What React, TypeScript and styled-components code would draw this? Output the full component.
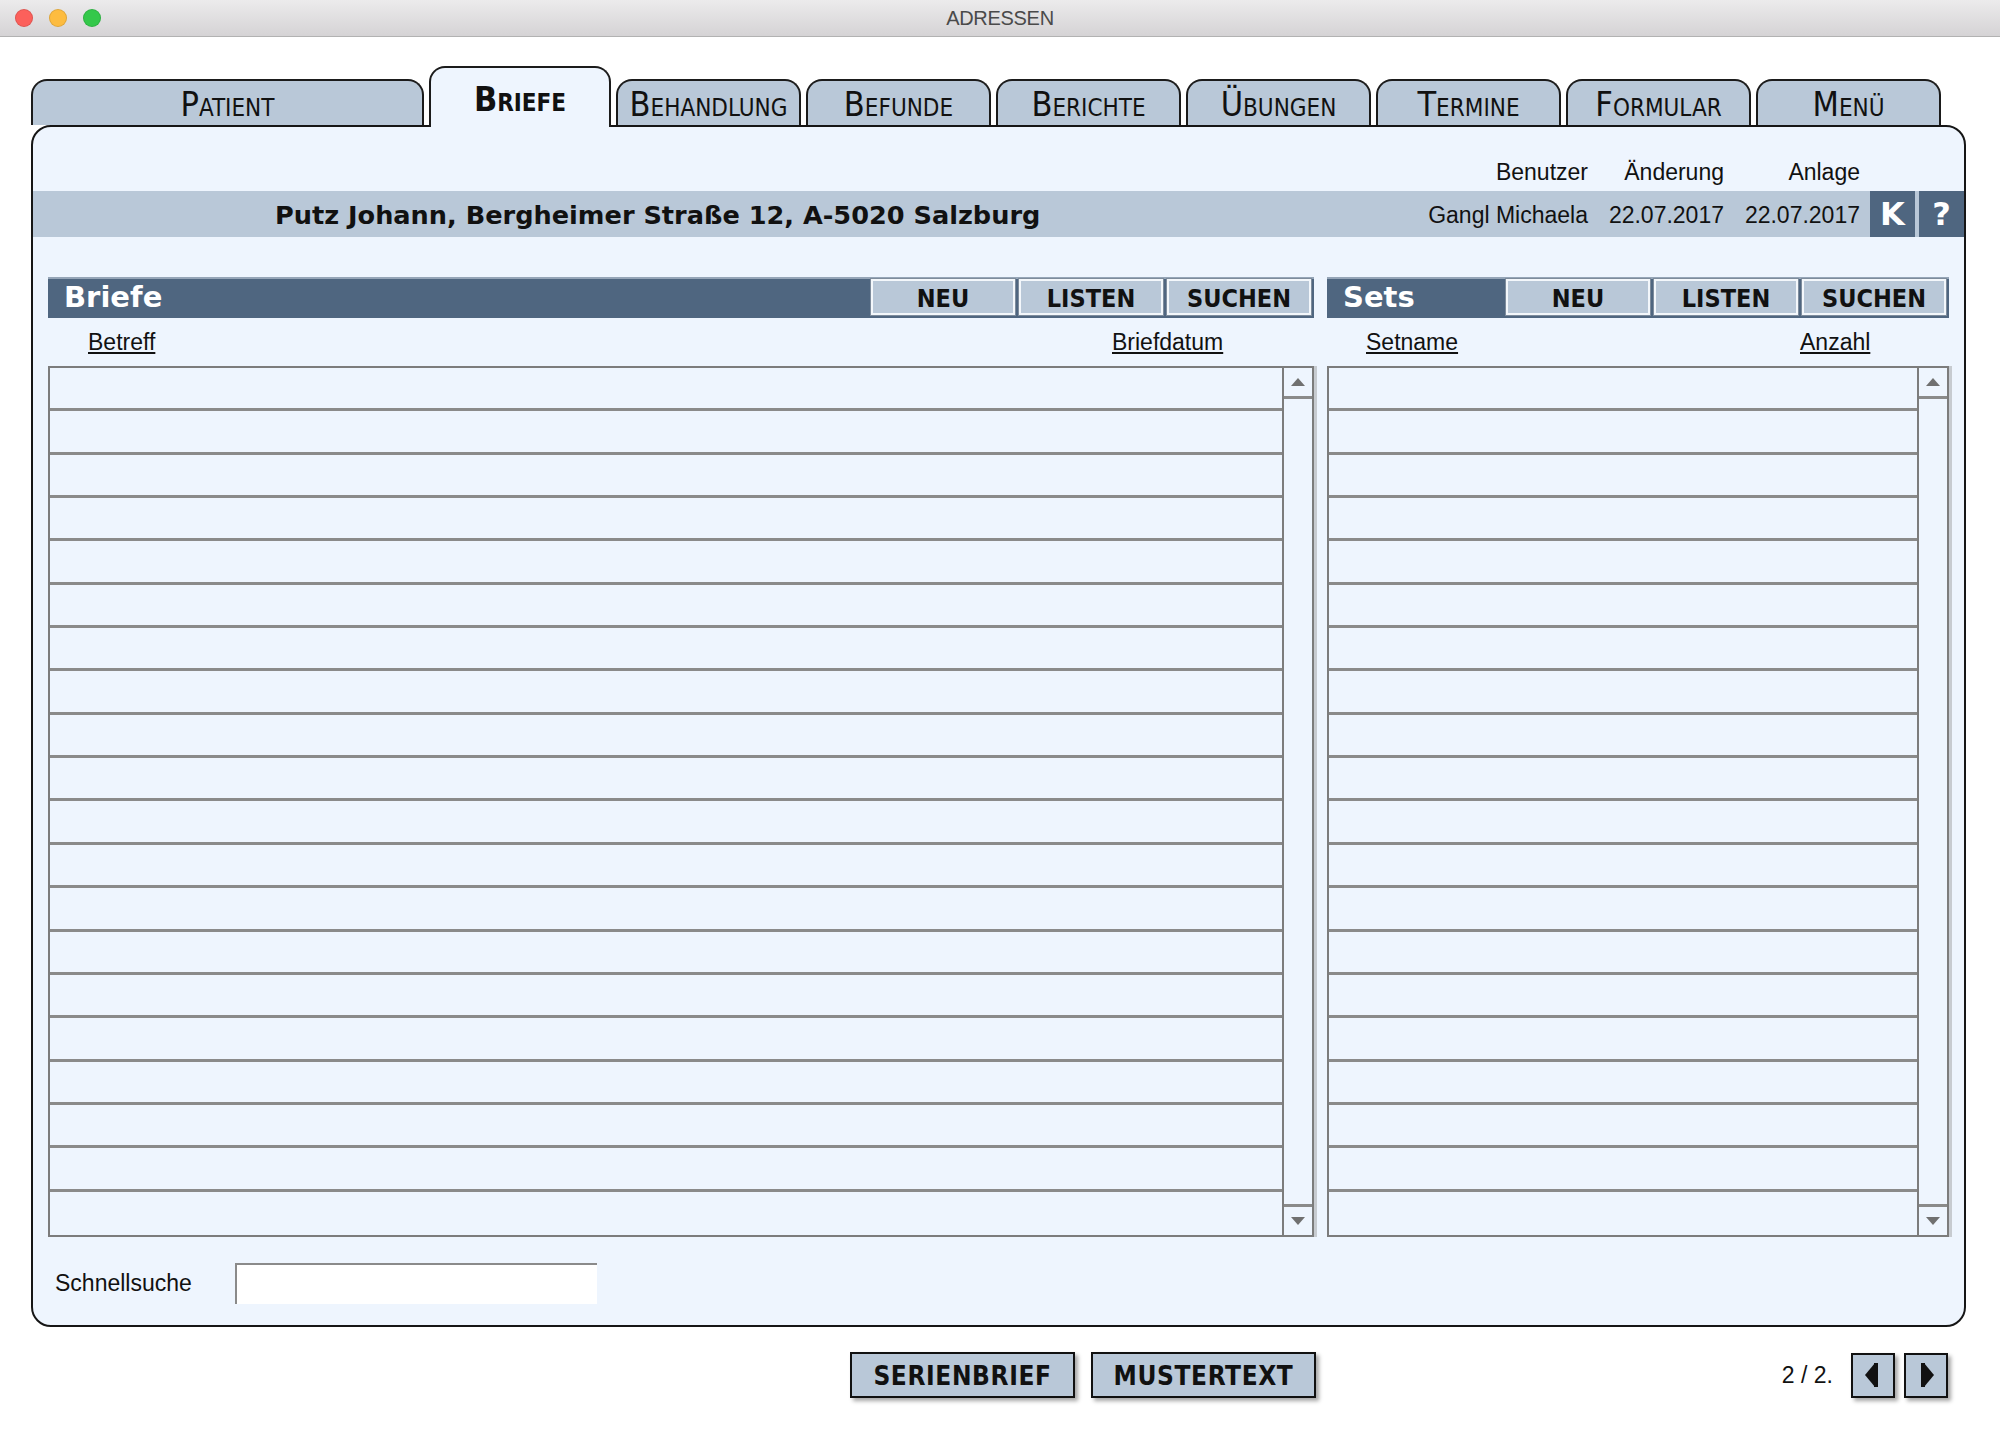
import styled, { createGlobalStyle } from 'styled-components'

const GlobalStyle = createGlobalStyle`
  html, body {
    margin: 0;
    padding: 0;
    background: #fff;
  }
  body {
    font-family: 'Liberation Sans', Arial, sans-serif;
    color: #111;
  }
  * {
    box-sizing: border-box;
  }
`

const PANEL_BG = '#eef5fe'
const LIGHT = '#b9c8d8'
const SLATE = '#4f6680'
const condensed = `
  font-family: 'DejaVu Sans Condensed', 'DejaVu Sans', sans-serif;
  font-stretch: condensed;
`

const Window = styled.div`
  width: 2000px;
  height: 1430px;
  display: flex;
  flex-direction: column;
  background: #fff;
`

const TitleBar = styled.div`
  height: 37px;
  flex: none;
  display: grid;
  grid-template-columns: 1fr auto 1fr;
  align-items: center;
  background: linear-gradient(#ecebec, #d5d3d5);
  border-bottom: 1px solid #b2b2b2;
`

const Lights = styled.div`
  display: flex;
  gap: 16px;
  padding-left: 15px;
`

const Light = styled.span<{ $c: string }>`
  width: 18px;
  height: 18px;
  border-radius: 50%;
  background: ${(p) => p.$c};
  box-shadow: inset 0 0 0 1px rgba(0, 0, 0, 0.12);
`

const WindowTitle = styled.div`
  font-size: 20px;
  color: #4a4a4a;
  letter-spacing: -0.3px;
`

const Body = styled.div`
  padding: 0 34px 0 31px;
`

const TabRow = styled.div`
  margin-top: 29px;
  height: 59px;
  display: flex;
  align-items: flex-end;
  gap: 5px;
`

const Tab = styled.div<{ $w: number; $active?: boolean }>`
  position: relative;
  z-index: ${(p) => (p.$active ? 2 : 0)};
  width: ${(p) => p.$w}px;
  height: ${(p) => (p.$active ? 61 : 46)}px;
  margin-bottom: ${(p) => (p.$active ? -2 : 0)}px;
  border: 2px solid #1b1b1b;
  border-bottom: none;
  border-radius: 16px 16px 0 0;
  background: ${(p) => (p.$active ? PANEL_BG : LIGHT)};
  display: flex;
  justify-content: center;
  align-items: ${(p) => (p.$active ? 'flex-start' : 'center')};
  padding-top: ${(p) => (p.$active ? 14 : 1)}px;
  ${condensed}
  font-variant: small-caps;
  font-size: 34px;
  font-weight: ${(p) => (p.$active ? 700 : 400)};
  line-height: 1;
  color: #111;
`

const Panel = styled.div`
  border: 2px solid #161616;
  border-radius: 20px;
  background: ${PANEL_BG};
  padding-bottom: 21px;
`

const MetaLabels = styled.div`
  display: flex;
  justify-content: flex-end;
  padding: 30px 104px 0 0;
  height: 60px;
  font-size: 23px;
  line-height: 30px;
`

const MetaCell = styled.div<{ $w: number }>`
  width: ${(p) => p.$w}px;
  text-align: right;
  white-space: nowrap;
`

const PatientBar = styled.div`
  margin-top: 4px;
  height: 46px;
  display: flex;
  align-items: center;
  background: ${LIGHT};
  font-size: 23px;
  padding-top: 2px;
`

const PatientName = styled.div`
  flex: 1;
  padding-left: 242px;
  font-family: 'DejaVu Sans', Verdana, sans-serif;
  font-weight: 700;
  font-size: 25.6px;
`

const IconBox = styled.div<{ $first?: boolean }>`
  width: 45px;
  height: 46px;
  margin-top: -2px;
  margin-left: ${(p) => (p.$first ? 10 : 4)}px;
  background: ${SLATE};
  color: #fff;
  display: flex;
  align-items: center;
  justify-content: center;
  font-family: 'DejaVu Sans', Verdana, sans-serif;
  font-weight: 700;
  font-size: 32px;
`

const Sections = styled.div`
  margin: 40px 15px 0;
  display: grid;
  grid-template-columns: 1266px 622px;
  column-gap: 13px;
`

const Section = styled.div`
  display: flex;
  flex-direction: column;
`

const SectionHead = styled.div`
  height: 41px;
  display: flex;
  align-items: flex-start;
  gap: 4px;
  padding-right: 3px;
  background: ${SLATE};
  border-top: 2px solid #95a5b7;
`

const SectionTitle = styled.div`
  flex: 1;
  padding-left: 16px;
  line-height: 37px;
  font-family: 'DejaVu Sans', Verdana, sans-serif;
  font-weight: 700;
  font-size: 29px;
  color: #fff;
`

const HeadButton = styled.button`
  width: 144px;
  height: 36px;
  padding: 2px 0 0;
  background: ${LIGHT};
  border: 2px solid #f3f7fb;
  box-shadow: 0 0 0 1px #7e8c9c;
  ${condensed}
  font-weight: 700;
  font-size: 25px;
  color: #111;
  cursor: pointer;
`

const ColumnHeads = styled.div<{ $pad: number }>`
  height: 48px;
  display: flex;
  align-items: center;
  padding-left: ${(p) => p.$pad}px;
  font-size: 23px;
`

const HeadLabel = styled.span<{ $w?: number }>`
  ${(p) => (p.$w ? `width: ${p.$w}px;` : '')}
  flex: none;
  text-decoration: underline;
  text-underline-offset: 2px;
  color: #111;
`

const ListBox = styled.div`
  height: 871px;
  display: flex;
  border: 2px solid #7c7c7c;
  box-shadow: 3px 0 0 #c7cbd0;
`

const Rows = styled.div`
  flex: 1;
  display: grid;
  grid-template-rows: repeat(20, 1fr);
`

const Row = styled.div`
  border-bottom: 3px solid #8a8a8a;
  &:last-child {
    border-bottom: none;
  }
`

const ScrollBar = styled.div`
  width: 30px;
  flex: none;
  display: flex;
  flex-direction: column;
  border-left: 2px solid #7c7c7c;
`

const ScrollArrow = styled.div<{ $down?: boolean }>`
  height: 31px;
  display: flex;
  align-items: center;
  justify-content: center;
  ${(p) =>
    p.$down
      ? 'margin-top: auto; border-top: 3px solid #8a8a8a;'
      : 'border-bottom: 3px solid #8a8a8a;'}
  &::after {
    content: '';
    width: 0;
    height: 0;
    border-left: 7px solid transparent;
    border-right: 7px solid transparent;
    ${(p) =>
      p.$down
        ? 'border-top: 8px solid #707070;'
        : 'border-bottom: 8px solid #707070;'}
  }
`

const SearchRow = styled.div`
  margin-top: 26px;
  height: 41px;
  display: flex;
  align-items: center;
  padding-left: 22px;
  font-size: 23px;
`

const SearchLabel = styled.label`
  width: 180px;
`

const SearchInput = styled.input`
  width: 362px;
  height: 41px;
  background: #fff;
  border: none;
  border-top: 2px solid #8a8a8a;
  border-left: 2px solid #8a8a8a;
  outline: none;
  font-size: 20px;
`

const BottomBar = styled.div`
  margin-top: 25px;
  height: 46px;
  display: flex;
  align-items: center;
  gap: 16px;
  padding-left: 819px;
`

const BigButton = styled.button`
  width: 225px;
  height: 46px;
  padding: 2px 0 0;
  background: ${LIGHT};
  border: 2px solid #111;
  box-shadow: 3px 3px 4px rgba(0, 0, 0, 0.35);
  ${condensed}
  font-weight: 700;
  font-size: 26px;
  letter-spacing: 0.6px;
  color: #111;
  cursor: pointer;
`

const Pager = styled.div`
  margin-left: auto;
  margin-right: 18px;
  display: flex;
  align-items: center;
  gap: 9px;
  font-size: 23px;
`

const PageText = styled.span`
  margin-right: 9px;
`

const NavButton = styled.button`
  width: 44px;
  height: 45px;
  padding: 0;
  background: ${LIGHT};
  border: 2px solid #111;
  box-shadow: 3px 3px 4px rgba(0, 0, 0, 0.35);
  display: flex;
  align-items: center;
  justify-content: center;
  cursor: pointer;
`

const tabs = [
  { label: 'Patient', w: 393 },
  { label: 'Briefe', w: 182, active: true },
  { label: 'Behandlung', w: 185 },
  { label: 'Befunde', w: 185 },
  { label: 'Berichte', w: 185 },
  { label: 'Übungen', w: 185 },
  { label: 'Termine', w: 185 },
  { label: 'Formular', w: 185 },
  { label: 'Menü', w: 185 },
]

const ROWS = Array.from({ length: 20 }, (_, i) => i)

function List() {
  return (
    <ListBox>
      <Rows>
        {ROWS.map((i) => (
          <Row key={i} />
        ))}
      </Rows>
      <ScrollBar>
        <ScrollArrow />
        <ScrollArrow $down />
      </ScrollBar>
    </ListBox>
  )
}

function Arrow({ dir }: { dir: 'left' | 'right' }) {
  return (
    <svg width="20" height="30" viewBox="0 0 20 30">
      {dir === 'left' ? (
        <>
          <polygon points="12,3 2,15 12,27" fill="#111" />
          <rect x="11" y="3" width="4" height="24" fill="#111" />
        </>
      ) : (
        <>
          <polygon points="8,3 18,15 8,27" fill="#111" />
          <rect x="5" y="3" width="4" height="24" fill="#111" />
        </>
      )}
    </svg>
  )
}

export default function App() {
  return (
    <>
      <GlobalStyle />
      <Window>
        <TitleBar>
          <Lights>
            <Light $c="#fc605b" />
            <Light $c="#fdbc40" />
            <Light $c="#34c84a" />
          </Lights>
          <WindowTitle>ADRESSEN</WindowTitle>
          <div />
        </TitleBar>

        <Body>
          <TabRow>
            {tabs.map((t) => (
              <Tab key={t.label} $w={t.w} $active={t.active}>
                {t.label}
              </Tab>
            ))}
          </TabRow>

          <Panel>
            <MetaLabels>
              <MetaCell $w={200}>Benutzer</MetaCell>
              <MetaCell $w={136}>Änderung</MetaCell>
              <MetaCell $w={136}>Anlage</MetaCell>
            </MetaLabels>
            <PatientBar>
              <PatientName>Putz Johann, Bergheimer Straße 12, A-5020 Salzburg</PatientName>
              <MetaCell $w={200}>Gangl Michaela</MetaCell>
              <MetaCell $w={136}>22.07.2017</MetaCell>
              <MetaCell $w={136}>22.07.2017</MetaCell>
              <IconBox $first>K</IconBox>
              <IconBox>?</IconBox>
            </PatientBar>

            <Sections>
              <Section>
                <SectionHead>
                  <SectionTitle>Briefe</SectionTitle>
                  <HeadButton>NEU</HeadButton>
                  <HeadButton>LISTEN</HeadButton>
                  <HeadButton>SUCHEN</HeadButton>
                </SectionHead>
                <ColumnHeads $pad={40}>
                  <HeadLabel $w={1024}>Betreff</HeadLabel>
                  <HeadLabel>Briefdatum</HeadLabel>
                </ColumnHeads>
                <List />
              </Section>

              <Section>
                <SectionHead>
                  <SectionTitle>Sets</SectionTitle>
                  <HeadButton>NEU</HeadButton>
                  <HeadButton>LISTEN</HeadButton>
                  <HeadButton>SUCHEN</HeadButton>
                </SectionHead>
                <ColumnHeads $pad={39}>
                  <HeadLabel $w={434}>Setname</HeadLabel>
                  <HeadLabel>Anzahl</HeadLabel>
                </ColumnHeads>
                <List />
              </Section>
            </Sections>

            <SearchRow>
              <SearchLabel>Schnellsuche</SearchLabel>
              <SearchInput />
            </SearchRow>
          </Panel>

          <BottomBar>
            <BigButton>SERIENBRIEF</BigButton>
            <BigButton>MUSTERTEXT</BigButton>
            <Pager>
              <PageText>2 / 2.</PageText>
              <NavButton>
                <Arrow dir="left" />
              </NavButton>
              <NavButton>
                <Arrow dir="right" />
              </NavButton>
            </Pager>
          </BottomBar>
        </Body>
      </Window>
    </>
  )
}
